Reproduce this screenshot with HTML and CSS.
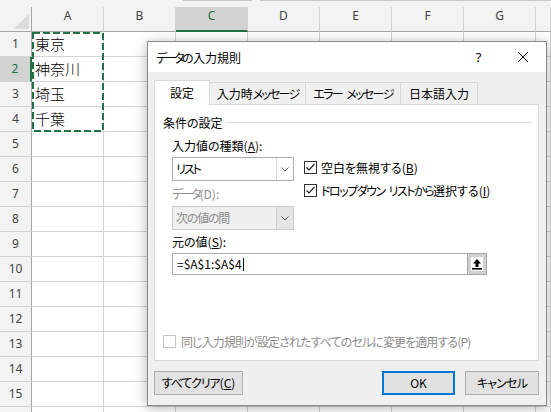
FILE: index.html
```html
<!DOCTYPE html>
<html lang="ja">
<head>
<meta charset="utf-8">
<title>データの入力規則</title>
<link rel="stylesheet" href="styles.css">
</head>
<body>
<div class="sheet">
  <div class="strip"><span class="seg seg1"></span><span class="seg seg2"></span></div>
  <div class="row head">
    <div class="corner"><span class="tri"></span></div>
    <div class="ch">A</div><div class="ch">B</div><div class="ch sel">C</div><div class="ch">D</div><div class="ch">E</div><div class="ch">F</div><div class="ch">G</div><div class="ch"></div>
  </div>
  <div class="row"><div class="rh">1</div><div class="c">東京</div><div class="c"></div><div class="c"></div><div class="c"></div><div class="c"></div><div class="c"></div><div class="c"></div><div class="c"></div></div>
  <div class="row"><div class="rh sel">2</div><div class="c">神奈川</div><div class="c"></div><div class="c"></div><div class="c"></div><div class="c"></div><div class="c"></div><div class="c"></div><div class="c"></div></div>
  <div class="row"><div class="rh">3</div><div class="c">埼玉</div><div class="c"></div><div class="c"></div><div class="c"></div><div class="c"></div><div class="c"></div><div class="c"></div><div class="c"></div></div>
  <div class="row"><div class="rh">4</div><div class="c">千葉</div><div class="c"></div><div class="c"></div><div class="c"></div><div class="c"></div><div class="c"></div><div class="c"></div><div class="c"></div></div>
  <div class="row"><div class="rh">5</div><div class="c"></div><div class="c"></div><div class="c"></div><div class="c"></div><div class="c"></div><div class="c"></div><div class="c"></div><div class="c"></div></div>
  <div class="row"><div class="rh">6</div><div class="c"></div><div class="c"></div><div class="c"></div><div class="c"></div><div class="c"></div><div class="c"></div><div class="c"></div><div class="c"></div></div>
  <div class="row"><div class="rh">7</div><div class="c"></div><div class="c"></div><div class="c"></div><div class="c"></div><div class="c"></div><div class="c"></div><div class="c"></div><div class="c"></div></div>
  <div class="row"><div class="rh">8</div><div class="c"></div><div class="c"></div><div class="c"></div><div class="c"></div><div class="c"></div><div class="c"></div><div class="c"></div><div class="c"></div></div>
  <div class="row"><div class="rh">9</div><div class="c"></div><div class="c"></div><div class="c"></div><div class="c"></div><div class="c"></div><div class="c"></div><div class="c"></div><div class="c"></div></div>
  <div class="row"><div class="rh">10</div><div class="c"></div><div class="c"></div><div class="c"></div><div class="c"></div><div class="c"></div><div class="c"></div><div class="c"></div><div class="c"></div></div>
  <div class="row"><div class="rh">11</div><div class="c"></div><div class="c"></div><div class="c"></div><div class="c"></div><div class="c"></div><div class="c"></div><div class="c"></div><div class="c"></div></div>
  <div class="row"><div class="rh">12</div><div class="c"></div><div class="c"></div><div class="c"></div><div class="c"></div><div class="c"></div><div class="c"></div><div class="c"></div><div class="c"></div></div>
  <div class="row"><div class="rh">13</div><div class="c"></div><div class="c"></div><div class="c"></div><div class="c"></div><div class="c"></div><div class="c"></div><div class="c"></div><div class="c"></div></div>
  <div class="row"><div class="rh">14</div><div class="c"></div><div class="c"></div><div class="c"></div><div class="c"></div><div class="c"></div><div class="c"></div><div class="c"></div><div class="c"></div></div>
  <div class="row"><div class="rh">15</div><div class="c"></div><div class="c"></div><div class="c"></div><div class="c"></div><div class="c"></div><div class="c"></div><div class="c"></div><div class="c"></div></div>
  <div class="row"><div class="rh"></div><div class="c"></div><div class="c"></div><div class="c"></div><div class="c"></div><div class="c"></div><div class="c"></div><div class="c"></div><div class="c"></div></div>
</div>

<svg class="ants" width="72" height="100" viewBox="0 0 72 100"><rect x="1" y="1" width="70" height="98" fill="none" stroke="#217346" stroke-width="2" stroke-dasharray="7 3"/></svg>

<div class="dialog">
  <div class="titlebar">
    <span class="title"><span class="k25">データの</span>入力規則</span>
    <span class="help">?</span>
    <span class="close"><svg width="10" height="10" viewBox="0 0 10 10"><path d="M0 0L10 10M10 0L0 10" stroke="#000" stroke-width="1"/></svg></span>
  </div>
  <div class="dbody">
    <div class="tabs">
      <div class="tab active t1">設定</div>
      <div class="tab t2">入力時<span class="k18">メッセージ</span></div>
      <div class="tab t3"><span class="k16">エラー</span><span class="sp"> </span><span class="k16">メッセージ</span></div>
      <div class="tab t4">日本語入力</div>
    </div>
    <div class="panel">
      <div class="group"><span>条件の設定</span><span class="rule"></span></div>
      <div class="settings">
        <div class="leftcol">
          <div class="lbl">入力値の種類(<u>A</u>):</div>
          <div class="select"><span class="val"><span class="k20">リスト</span></span><span class="arrow"><svg width="8" height="5" viewBox="0 0 8 5"><path d="M0.5 0.5L4 4L7.5 0.5" fill="none" stroke="#555" stroke-width="1"/></svg></span></div>
          <div class="lbl dis lbl2"><span class="k20">データ</span>(D):</div>
          <div class="select disabled"><span class="val"><span class="k12">次の値の間</span></span><span class="arrow"><svg width="8" height="5" viewBox="0 0 8 5"><path d="M0.5 0.5L4 4L7.5 0.5" fill="none" stroke="#555" stroke-width="1"/></svg></span></div>
        </div>
        <div class="rightcol">
          <div class="check"><svg class="box" width="13" height="13" viewBox="0 0 13 13"><rect x="0.5" y="0.5" width="12" height="12" fill="#fff" stroke="#333"/><path d="M2.5 6.5L5 9L10.5 3" fill="none" stroke="#222" stroke-width="1.2"/></svg><span>空白を無視する(<u>B</u>)</span></div>
          <div class="check"><svg class="box" width="13" height="13" viewBox="0 0 13 13"><rect x="0.5" y="0.5" width="12" height="12" fill="#fff" stroke="#333"/><path d="M2.5 6.5L5 9L10.5 3" fill="none" stroke="#222" stroke-width="1.2"/></svg><span><span class="k15">ドロップダウン</span><span class="sp"> </span><span class="k15">リストから</span>選択する(<u>I</u>)</span></div>
        </div>
      </div>
      <div class="lbl src">元の値(<u>S</u>):</div>
      <div class="input">
        <span class="itext">=$A$1:$A$4<span class="caret"></span></span>
        <span class="refbtn"><svg width="10" height="11" viewBox="0 0 10 11"><path d="M5 0L9 4.5H6.5V8H3.5V4.5H1Z" fill="#000"/><rect x="0" y="9" width="10" height="1.6" fill="#000"/></svg></span>
      </div>
      <div class="check dis apply"><svg class="box" width="13" height="13" viewBox="0 0 13 13"><rect x="0.5" y="0.5" width="12" height="12" fill="#fff" stroke="#c4c4c4"/></svg><span class="k09">同じ入力規則が設定されたすべてのセルに変更を適用する(P)</span></div>
    </div>
    <div class="buttons">
      <div class="btn clear"><span class="k11">すべてクリア</span>(<u>C</u>)</div>
      <div class="btn ok">OK</div>
      <div class="btn cancel"><span class="k08">キャンセル</span></div>
    </div>
  </div>
</div>
</body>
</html>
```

FILE: styles.css
```css
* { box-sizing: border-box; }

body {
  margin: 0;
  width: 551px;
  height: 412px;
  overflow: hidden;
  position: relative;
  background: #fff;
  font-family: "Noto Sans", "Noto Sans CJK JP", sans-serif;
}

.sheet { width: 551px; }

.strip {
  height: 7px;
  background: #f3f3f3;
  display: flex;
}
.seg { height: 1px; background: #c8c8c8; }
.seg1 { margin-left: 183px; width: 69px; }
.seg2 { margin-left: 8px; flex: 1; }

.row {
  display: grid;
  grid-template-columns: 32px repeat(7, 72px) 1fr;
  height: 25px;
}

.head { background: #f3f3f3; }

.corner {
  border-right: 1px solid #a6a6a6;
  border-bottom: 1px solid #a6a6a6;
  display: flex;
  align-items: flex-end;
  justify-content: flex-end;
  padding: 0 2px 2px 0;
}
.tri {
  width: 0;
  height: 0;
  border-left: 15px solid transparent;
  border-bottom: 15px solid #dcdcdc;
}

.ch {
  border-right: 1px solid #d4d4d4;
  border-bottom: 1px solid #a6a6a6;
  text-align: center;
  font-size: 12px;
  line-height: 16px;
  padding-top: 1px;
  color: #444;
}
.ch.sel {
  background: #d2d2d2;
  border-bottom: 2px solid #217346;
  color: #217346;
}

.rh {
  background: #f3f3f3;
  border-right: 1px solid #a6a6a6;
  border-bottom: 1px solid #d4d4d4;
  text-align: center;
  font-size: 12px;
  line-height: 24px;
  color: #444;
}
.rh.sel {
  background: #d2d2d2;
  border-right: 2px solid #217346;
  color: #217346;
}

.c {
  border-right: 1px solid #d4d4d4;
  border-bottom: 1px solid #d4d4d4;
  font-family: "Noto Sans CJK JP", sans-serif;
  font-size: 15px;
  font-weight: 300;
  line-height: 24px;
  padding-left: 3px;
  color: #000;
  white-space: nowrap;
}

.ants {
  position: absolute;
  left: 32px;
  top: 32px;
}

/* dialog */
.dialog {
  position: absolute;
  left: 147px;
  top: 41px;
  width: 400px;
  height: 365px;
  border: 1px solid #8a8a8a;
  background: #f0f0f0;
  box-shadow: 0 2px 12px rgba(0, 0, 0, 0.3);
  display: flex;
  flex-direction: column;
  font-family: "Noto Sans CJK JP", sans-serif;
  font-size: 12px;
  font-feature-settings: "palt";
  color: #000;
}

.k25 { letter-spacing: -2.5px; margin-right: 2px; }
.k20 { letter-spacing: -2px; }
.k18 { letter-spacing: -1.8px; }
.k16 { letter-spacing: -1.6px; }
.k15 { letter-spacing: -1.5px; }
.k12 { letter-spacing: -1.2px; }
.k11 { letter-spacing: -1.1px; }
.k09 { letter-spacing: -0.9px; }
.k08 { letter-spacing: -0.8px; }
.sp { display: inline-block; width: 4px; }

.titlebar {
  height: 30px;
  background: #fff;
  display: flex;
  align-items: center;
  padding-left: 8px;
  flex: none;
}
.title { flex: 1; }
.help {
  width: 46px;
  text-align: center;
  font-family: "Noto Sans", sans-serif;
  font-size: 13px;
  padding-left: 3px;
}
.close {
  width: 46px;
  display: flex;
  justify-content: center;
  align-items: center;
}

.dbody {
  flex: 1;
  padding: 8px 7px 0 6px;
  display: flex;
  flex-direction: column;
}

.tabs {
  display: flex;
  align-items: flex-end;
  height: 24px;
}
.tab {
  height: 22px;
  border: 1px solid #d9d9d9;
  border-bottom: none;
  margin-left: -1px;
  text-align: center;
  line-height: 21px;
  white-space: nowrap;
}
.tab.active {
  height: 25px;
  background: #fff;
  margin-bottom: -1px;
  position: relative;
  z-index: 1;
  line-height: 23px;
}
.t1 { width: 56px; margin-left: 0; }
.t2 { width: 97px; }
.t3 { width: 96px; }
.t4 { width: 78px; }

.panel {
  height: 257px;
  width: 385px;
  background: #fff;
  border: 1px solid #d9d9d9;
  padding: 0 6px 0 8px;
  display: flex;
  flex-direction: column;
  flex: none;
}

.group {
  display: flex;
  align-items: center;
  height: 16px;
  margin-top: 9px;
}
.rule {
  flex: 1;
  height: 1px;
  background: #d9d9d9;
  margin-left: 4px;
}

.settings {
  display: flex;
  margin-top: 8px;
  padding-left: 9px;
}
.leftcol {
  width: 122px;
  display: flex;
  flex-direction: column;
}
.lbl {
  height: 16px;
  line-height: 16px;
  white-space: nowrap;
}
.dis { color: #8d8d8d; }
.lbl2 { margin-top: 5px; }

.select {
  display: flex;
  height: 24px;
  margin-top: 3px;
  border: 1px solid #adadad;
  background: #fff;
}
.select .val {
  flex: 1;
  padding-left: 3px;
  line-height: 22px;
}
.select .arrow {
  width: 17px;
  border-left: 1px solid #dadada;
  display: flex;
  align-items: center;
  justify-content: center;
}
.select.disabled {
  margin-top: 4px;
  background: #f0f0f0;
  border-color: #cccccc;
  color: #8d8d8d;
}
.select.disabled .arrow {
  background: #e5e5e5;
  border-left-color: #cccccc;
}

.rightcol {
  margin-left: 10px;
  padding-top: 21px;
  display: flex;
  flex-direction: column;
  gap: 7px;
}
.check {
  display: flex;
  align-items: center;
  height: 16px;
  white-space: nowrap;
}
.check .box { margin-right: 4px; flex: none; }

.src { margin-top: 4px; padding-left: 9px; }

.input {
  margin-top: 3px;
  margin-left: 9px;
  width: 315px;
  height: 22px;
  border: 1px solid #adadad;
  background: #fff;
  display: flex;
  align-items: stretch;
}
.itext {
  flex: 1;
  padding-left: 4px;
  line-height: 20px;
  display: flex;
  align-items: center;
}
.caret {
  display: inline-block;
  width: 1px;
  height: 13px;
  background: #000;
  margin-left: 1px;
}
.refbtn {
  width: 20px;
  margin: -1px -1px -1px 0;
  border: 1px solid #a9a9a9;
  box-shadow: inset 0 0 0 3px #d0d0d0;
  background: #fff;
  display: flex;
  align-items: center;
  justify-content: center;
}

.apply { margin-top: 58px; }
.apply .box { margin-right: 5px; }

.buttons {
  display: flex;
  margin-top: 10px;
  height: 24px;
}
.btn {
  height: 24px;
  background: #e1e1e1;
  border: 1px solid #adadad;
  text-align: center;
  line-height: 22px;
  white-space: nowrap;
}
.clear { width: 89px; }
.ok {
  margin-left: auto;
  width: 73px;
  border: 2px solid #0078d7;
  line-height: 20px;
}
.cancel { width: 74px; margin-left: 10px; }
```
